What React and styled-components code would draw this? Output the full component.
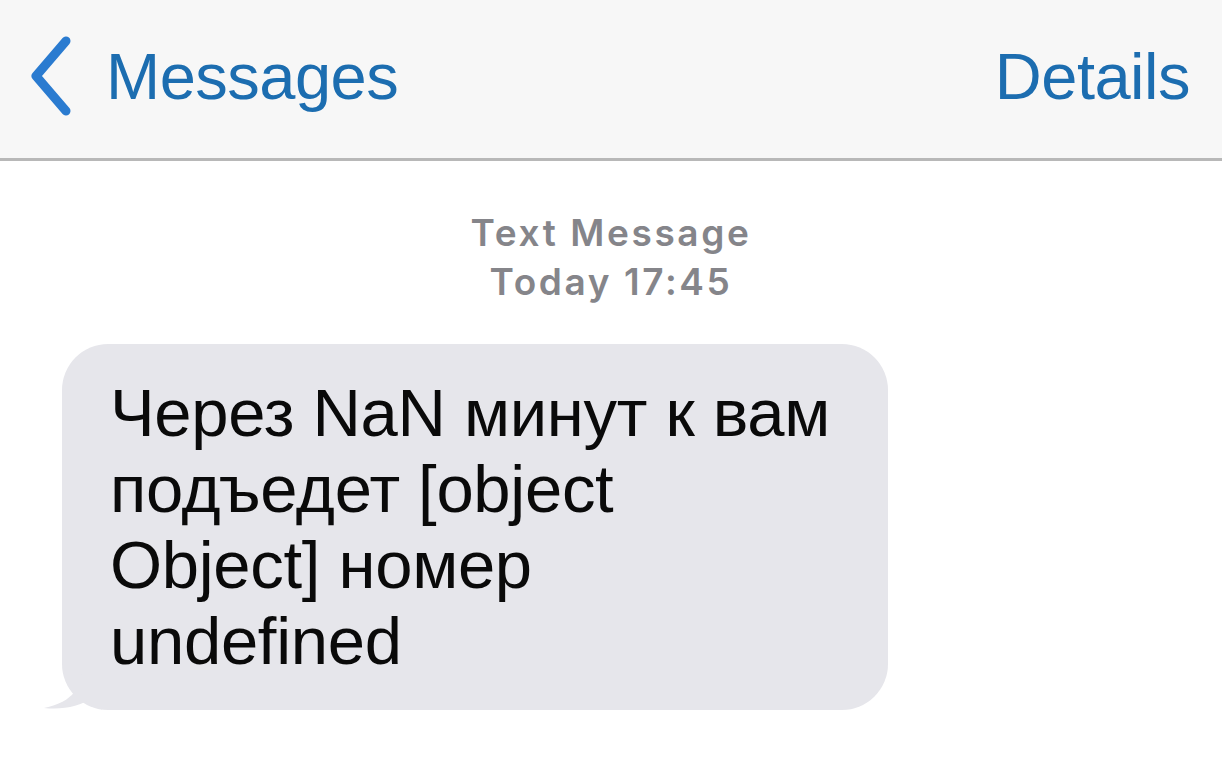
import React from "react";
import styled, { createGlobalStyle } from "styled-components";

const Global = createGlobalStyle`
  html, body { margin: 0; padding: 0; background: #ffffff; }
  body { font-family: "Liberation Sans", Arial, sans-serif; }
`;

const Page = styled.div`
  width: 1222px;
  height: 779px;
  background: #ffffff;
  overflow: hidden;
`;

const NavBar = styled.header`
  height: 161px;
  background: #f7f7f7;
  border-bottom: 3px solid #b8b8b8;
  display: flex;
  align-items: center;
  justify-content: space-between;
  padding: 0 32px 6px 28px;
  box-sizing: border-box;
  width: 1222px;
`;

const NavButton = styled.div`
  display: flex;
  align-items: center;
  gap: 34px;
  color: #1c6db0;
  font-size: 65px;
  line-height: 1;
  letter-spacing: -0.5px;
`;

const Chevron = styled.svg`
  width: 44px;
  height: 80px;
  flex: none;
`;

const Content = styled.main`
  display: flex;
  flex-direction: column;
  padding-top: 47px;
`;

const Stamp = styled.div`
  text-align: center;
  color: #85858a;
  font-family: Inter, "Liberation Sans", sans-serif;
  font-weight: 600;
  font-size: 37px;
  line-height: 49px;
  letter-spacing: 2.6px;
`;

const BubbleRow = styled.div`
  display: flex;
  padding-left: 62px;
  margin-top: 38px;
`;

const Bubble = styled.div`
  position: relative;
  width: 826px;
  box-sizing: border-box;
  background: #e6e6eb;
  border-radius: 46px;
  padding: 31px 20px 31px 48px;
  color: #0a0a0a;
  font-size: 67px;
  line-height: 76px;
  letter-spacing: -0.3px;
  white-space: pre;
`;

const Tail = styled.svg`
  position: absolute;
  left: -20px;
  bottom: 0;
  width: 60px;
  height: 44px;
`;

export default function App() {
  return (
    <Page>
      <Global />
      <NavBar>
        <NavButton>
          <Chevron viewBox="0 0 44 80">
            <path
              d="M38 5 L8 40 L38 75"
              fill="none"
              stroke="#2a7bd0"
              strokeWidth="9"
              strokeLinecap="round"
              strokeLinejoin="round"
            />
          </Chevron>
          Messages
        </NavButton>
        <NavButton>Details</NavButton>
      </NavBar>
      <Content>
        <Stamp>
          Text Message
          <br />
          Today 17:45
        </Stamp>
        <BubbleRow>
          <Bubble>
            <Tail viewBox="0 0 60 44">
              <path
                d="M40 0 C40 20 32 36 2 42 C22 44 38 40 50 32 L60 44 L60 0 Z"
                fill="#e6e6eb"
              />
            </Tail>
            {"Через NaN минут к вам\nподъедет [object\nObject] номер\nundefined"}
          </Bubble>
        </BubbleRow>
      </Content>
    </Page>
  );
}
